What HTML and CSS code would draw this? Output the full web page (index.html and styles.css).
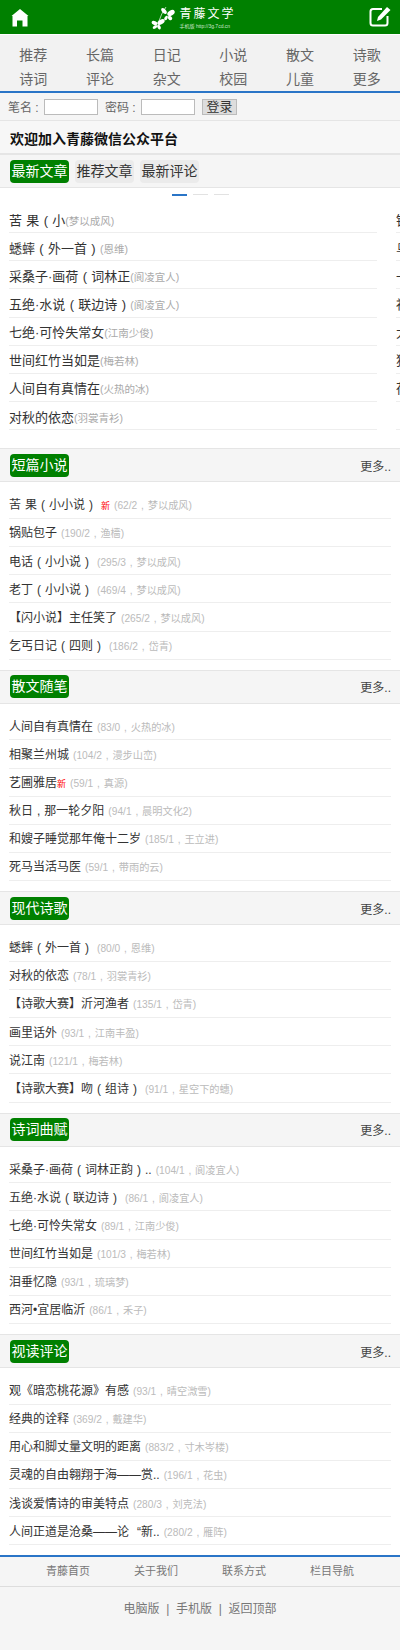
FILE: index.html
```html
<!DOCTYPE html>
<html lang="zh-CN">
<head>
    <meta charset="UTF-8">
    <meta name="viewport" content="width=device-width, initial-scale=1.0">
    <title>青藤文学</title>
    <link rel="stylesheet" href="styles.css">
</head>
<body>
    <div class="header">
        <a class="head-icon home">
            <svg width="18" height="18" viewBox="0 0 18 18"><path d="M9 0 L17.500 7 L16.500 7 L16.500 17.500 L11.500 17.500 L11.500 11.500 L6 11.500 L6 17.500 L1.500 17.500 L1.500 7 L0.500 7 Z" fill="#fff"/></svg>
        </a>
        <div class="logo">
            <svg width="24" height="26" viewBox="0 0 24 26">
                <g fill="#fff">
                    <ellipse cx="20" cy="9" rx="4" ry="2.500" transform="rotate(-30 20 9)"/>
                    <ellipse cx="13" cy="7" rx="3.500" ry="2" transform="rotate(50 13 7)"/>
                    <ellipse cx="19" cy="14" rx="2.500" ry="1.800" transform="rotate(40 19 14)"/>
                    <ellipse cx="15" cy="14" rx="2.500" ry="1.500" transform="rotate(-60 15 14)"/>
                    <ellipse cx="10" cy="18" rx="4" ry="2.200" transform="rotate(-30 10 18)"/>
                    <ellipse cx="3.500" cy="19" rx="3" ry="2" transform="rotate(25 3.500 19)"/>
                    <ellipse cx="8" cy="23" rx="2.500" ry="1.600" transform="rotate(60 8 23)"/>
                    <ellipse cx="4" cy="23" rx="2.500" ry="1.500" transform="rotate(-30 4 23)"/>
                </g>
                <path d="M8 17 Q10 10 15 3" fill="none" stroke="#fff" stroke-width="0.700"/>
            </svg>
            <div class="logo-text">
                <div class="logo-name">青藤文学</div>
                <div class="logo-url">手机版 http://3g.7cd.cn</div>
            </div>
        </div>
        <a class="head-icon">
            <svg width="22" height="20" viewBox="0 0 22 20"><path d="M13 2 L4 2 Q1.500 2 1.500 4.500 L1.500 16 Q1.500 18.500 4 18.500 L16 18.500 Q18.500 18.500 18.500 16 L18.500 9" fill="none" stroke="#fff" stroke-width="2"/><path d="M18 0 L21.500 3 L12 12.500 L8 14 L9 10 Z" fill="#fff"/></svg>
        </a>
    </div>

    <div class="nav">
        <a>推荐</a><a>长篇</a><a>日记</a><a>小说</a><a>散文</a><a>诗歌</a>
        <a>诗词</a><a>评论</a><a>杂文</a><a>校园</a><a>儿童</a><a>更多</a>
    </div>

    <div class="login">
        <span class="login-label">笔名 :</span><input class="login-input" type="text">
        <span class="login-label second">密码 :</span><input class="login-input" type="text">
        <button class="login-btn">登录</button>
    </div>

    <div class="welcome">欢迎加入青藤微信公众平台</div>

    <div class="tabs">
        <span class="badge">最新文章</span>
        <span class="tab">推荐文章</span>
        <span class="tab">最新评论</span>
    </div>

    <div class="dots"><i class="dot on"></i><i class="dot"></i><i class="dot"></i></div>

    <div class="slider">
        <ul class="list slide">
            <li>苦 果 ( 小<em class="by">(梦以成风)</em></li>
            <li>蟋蟀 ( 外一首 ) <em class="by">(恩维)</em></li>
            <li>采桑子·画荷 ( 词林正<em class="by">(阆凌宜人)</em></li>
            <li>五绝·水说 ( 联边诗 ) <em class="by">(阆凌宜人)</em></li>
            <li>七绝·可怜失常女<em class="by">(江南少俊)</em></li>
            <li>世间红竹当如是<em class="by">(梅若林)</em></li>
            <li>人间自有真情在<em class="by">(火热的冰)</em></li>
            <li>对秋的依恋<em class="by">(羽裳青衫)</em></li>
        </ul>
        <ul class="list slide">
            <li>锅贴包子</li>
            <li>乌</li>
            <li>一</li>
            <li>祖</li>
            <li>大</li>
            <li>狗</li>
            <li>荷</li>
            <li>&nbsp;</li>
        </ul>
    </div>

    <div class="sec-head sec-first"><span class="badge">短篇小说</span><a class="more">更多..</a></div>
    <ul class="list">
        <li>苦 果 ( 小小说 ) &nbsp;<b class="new">新</b><em>(62/2 , 梦以成风)</em></li>
        <li>锅贴包子<em>(190/2 , 渔樯)</em></li>
        <li>电话 ( 小小说 ) <em>(295/3 , 梦以成风)</em></li>
        <li>老丁 ( 小小说 ) <em>(469/4 , 梦以成风)</em></li>
        <li>【闪小说】主任笑了<em>(265/2 , 梦以成风)</em></li>
        <li>乞丐日记 ( 四则 ) <em>(186/2 , 岱青)</em></li>
    </ul>

    <div class="sec-head"><span class="badge">散文随笔</span><a class="more">更多..</a></div>
    <ul class="list">
        <li>人间自有真情在<em>(83/0 , 火热的冰)</em></li>
        <li>相聚兰州城<em>(104/2 , 漫步山峦)</em></li>
        <li>艺圃雅居<b class="new">新</b><em>(59/1 , 真源)</em></li>
        <li>秋日 , 那一轮夕阳<em>(94/1 , 晨明文化2)</em></li>
        <li>和嫂子睡觉那年俺十二岁<em>(185/1 , 王立进)</em></li>
        <li>死马当活马医<em>(59/1 , 带雨的云)</em></li>
    </ul>

    <div class="sec-head"><span class="badge">现代诗歌</span><a class="more">更多..</a></div>
    <ul class="list">
        <li>蟋蟀 ( 外一首 ) <em>(80/0 , 恩维)</em></li>
        <li>对秋的依恋<em>(78/1 , 羽裳青衫)</em></li>
        <li>【诗歌大赛】沂河渔者<em>(135/1 , 岱青)</em></li>
        <li>画里话外<em>(93/1 , 江南丰盈)</em></li>
        <li>说江南<em>(121/1 , 梅若林)</em></li>
        <li>【诗歌大赛】吻 ( 组诗 ) <em>(91/1 , 星空下的蟪)</em></li>
    </ul>

    <div class="sec-head"><span class="badge">诗词曲赋</span><a class="more">更多..</a></div>
    <ul class="list">
        <li>采桑子·画荷 ( 词林正韵 ) ..<em>(104/1 , 阆凌宜人)</em></li>
        <li>五绝·水说 ( 联边诗 ) <em>(86/1 , 阆凌宜人)</em></li>
        <li>七绝·可怜失常女<em>(89/1 , 江南少俊)</em></li>
        <li>世间红竹当如是<em>(101/3 , 梅若林)</em></li>
        <li>泪垂忆隐<em>(93/1 , 琉璃梦)</em></li>
        <li>西河•宜居临沂<em>(86/1 , 禾子)</em></li>
    </ul>

    <div class="sec-head"><span class="badge">视读评论</span><a class="more">更多..</a></div>
    <ul class="list">
        <li>观《暗恋桃花源》有感<em>(93/1 , 晴空溦雪)</em></li>
        <li>经典的诠释<em>(369/2 , 戴建华)</em></li>
        <li>用心和脚丈量文明的距离<em>(883/2 , 寸木岑楼)</em></li>
        <li>灵魂的自由翱翔于海——赏..<em>(196/1 , 花虫)</em></li>
        <li>浅谈爱情诗的审美特点<em>(280/3 , 刘克法)</em></li>
        <li>人间正道是沧桑——论&nbsp;&nbsp;“新..<em>(280/2 , 雁阵)</em></li>
    </ul>

    <div class="foot-nav">
        <a>青藤首页</a><a>关于我们</a><a>联系方式</a><a>栏目导航</a>
    </div>
    <div class="foot-links">电脑版 &nbsp;|&nbsp; 手机版 &nbsp;|&nbsp; 返回顶部</div>
</body>
</html>
```

FILE: styles.css
```css
body {
    margin: 0;
    width: 400px;
    font-family: "Liberation Sans", "Noto Sans CJK SC", sans-serif;
    font-size: 13px;
    color: #333;
    background: #fff;
}
ul {
    list-style: none;
    margin: 0;
    padding: 0;
}
em {
    font-style: normal;
}

.header {
    height: 34px;
    background: #008000;
    display: flex;
    justify-content: space-between;
    align-items: center;
    padding: 0 9px 0 11px;
}
.head-icon {
    display: flex;
}
.home {
    margin-top: 2px;
}
.logo {
    display: flex;
    align-items: center;
    gap: 5px;
    margin-right: 10px;
}
.logo-text {
    color: #fff;
}
.logo-name {
    font-family: "Liberation Serif", "Noto Sans CJK SC", serif;
    font-size: 12px;
    line-height: 18px;
    width: 58px;
    white-space: nowrap;
    letter-spacing: 2px;
}
.logo-url {
    font-size: 5px;
    line-height: 7px;
    white-space: nowrap;
    color: #cde6cd;
}

.nav {
    display: grid;
    grid-template-columns: repeat(6, 1fr);
    grid-auto-rows: 24px;
    align-items: center;
    text-align: center;
    background: #f2f2f2;
    padding: 7px 0 1px;
    margin-top: 1px;
    border-bottom: 2px solid #2a75c7;
    font-size: 14px;
    color: #666;
}

.login {
    display: flex;
    align-items: center;
    height: 27px;
    padding-left: 8px;
    background: #f5f5f5;
    border-bottom: 1px solid #e5e5e5;
    font-size: 12px;
    color: #666;
}
.login-label {
    width: 36px;
}
.login-label.second {
    margin-left: 7px;
}
.login-input {
    width: 54px;
    height: 16px;
    padding: 0;
    border: 1px solid #bbb;
    background: #fff;
    box-sizing: border-box;
}
.login-btn {
    width: 35px;
    height: 16px;
    margin-left: 7px;
    padding: 0;
    border: 1px solid #bbb;
    background: #ddd;
    color: #333;
    font-family: inherit;
    font-size: 13px;
    line-height: 14px;
}

.welcome {
    height: 32px;
    line-height: 37px;
    padding-left: 10px;
    background: #f7f7f7;
    border-bottom: 2px solid #e5e5e5;
    font-size: 14px;
    font-weight: bold;
    color: #111;
}

.tabs {
    display: flex;
    gap: 6px;
    height: 32px;
    align-items: center;
    padding-left: 10px;
    background: #f5f5f5;
    border-bottom: 1px solid #e5e5e5;
}
.badge, .tab {
    width: 59px;
    height: 23px;
    line-height: 23px;
    border-radius: 4px;
    text-align: center;
    font-size: 14px;
}
.badge {
    background: #008000;
    color: #fff;
}
.tab {
    background: #ebebeb;
    color: #333;
}

.dots {
    display: flex;
    justify-content: center;
    gap: 6px;
    height: 2px;
    padding: 6px 0 0;
    margin-bottom: 4px;
}
.dot {
    width: 15px;
    height: 1px;
    background: #e2e2e2;
}
.dot.on {
    height: 2px;
    background: #2a75c7;
}

.slider {
    display: flex;
    gap: 19px;
    overflow: hidden;
    padding-left: 9px;
}
.slide {
    width: 368px;
    flex-shrink: 0;
}
.list {
    margin: 0 9px;
    padding-top: 8.500px;
}
.slide.list {
    margin: 0;
    padding-top: 5px;
}
.list li {
    height: 25.670px;
    padding-top: 1.500px;
    line-height: 27px;
    border-bottom: 1px solid #eee;
    font-size: 12px;
    word-spacing: 0.056em;
    white-space: nowrap;
    overflow: hidden;
    color: #333;
}
.slide li {
    font-size: 13px;
}
.list em {
    font-size: 10.200px;
    word-spacing: 0.100em;
    color: #bbb;
    margin-left: 4px;
}
.list em.by {
    font-size: 10.500px;
    margin-left: 0;
    color: #aaa;
}
.new {
    font-weight: normal;
    font-size: 9px;
    color: #f00;
}

.sec-head {
    display: flex;
    justify-content: space-between;
    align-items: center;
    height: 34px;
    margin-top: 10px;
    padding: 0 9px 0 10px;
    background: #f5f5f5;
    border-top: 1px solid #e5e5e5;
    border-bottom: 1px solid #e5e5e5;
    box-sizing: border-box;
}
.sec-first {
    margin-top: 18px;
}
.more {
    font-size: 12px;
    color: #444;
}

.foot-nav {
    display: grid;
    grid-template-columns: repeat(4, 88px);
    justify-content: center;
    margin-top: 10px;
    height: 29px;
    line-height: 28px;
    text-align: center;
    font-size: 11px;
    color: #777;
    background: #f5f5f5;
    border-top: 2px solid #2a75c7;
    border-bottom: 1px solid #ddd;
}
.foot-links {
    height: 63px;
    padding-top: 12px;
    box-sizing: border-box;
    text-align: center;
    font-size: 12px;
    color: #777;
    background: #f5f5f5;
}
```
